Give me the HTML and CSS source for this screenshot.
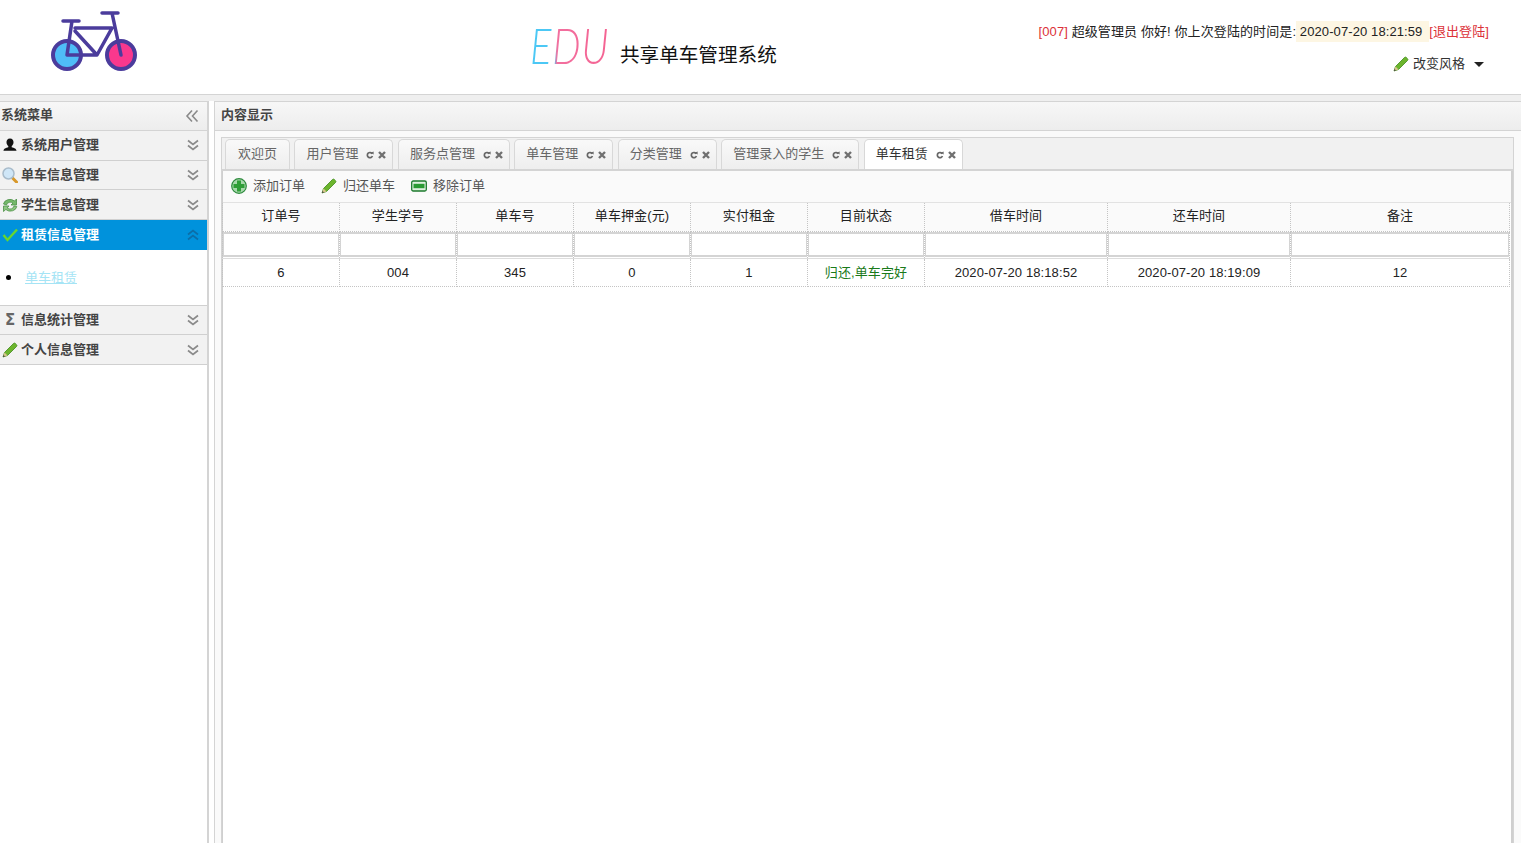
FILE: index.html
```html
<!DOCTYPE html>
<html lang="en">
<head>
  <meta charset="UTF-8" />
  <title>共享单车管理系统</title>
  <link rel="stylesheet" href="styles.css">
</head>
<body>

  <svg class="defs" width="0" height="0">
    <symbol id="i-pencil" viewBox="0 0 16 16">
      <path d="M1 15l1.500-4.500L11.500 1.500a1.300 1.300 0 0 1 1.800 0l1.200 1.200a1.300 1.300 0 0 1 0 1.800L5.500 13.500z" fill="#6cb52d" stroke="#3f8a1c" stroke-width=".8"/>
      <path d="M1 15l1.500-4.500 3 3z" fill="#d9c48f"/>
      <path d="M1 15l.6-1.900 1.300 1.300z" fill="#333"/>
    </symbol>
    <symbol id="i-down" viewBox="0 0 14 12">
      <path d="M2 1.500l5 4 5-4M2 6.500l5 4 5-4" fill="none" stroke="#8a8a8a" stroke-width="1.700"/>
    </symbol>
    <symbol id="i-up" viewBox="0 0 14 12">
      <path d="M2 5.500l5-4 5 4M2 10.500l5-4 5 4" fill="none" stroke="#0b6ea8" stroke-width="1.700"/>
    </symbol>
    <symbol id="i-refresh" viewBox="0 0 8 8">
      <path d="M6.200 2.800A2.600 2.600 0 1 0 6.400 5" fill="none" stroke="#666" stroke-width="1.700"/>
      <path d="M4.800 1.800L7.600.600v2.800z" fill="#666"/>
    </symbol>
    <symbol id="i-close" viewBox="0 0 8 8">
      <path d="M1 1l6 6M7 1L1 7" stroke="#707070" stroke-width="2.400"/>
    </symbol>
  </svg>

  <header class="top">
    <div class="logo">
      <svg width="90" height="64" viewBox="49 9 90 64">
        <circle cx="67" cy="55" r="14" fill="#4fbdf7" stroke="#4b3c9c" stroke-width="4"/>
        <circle cx="121" cy="55" r="14" fill="#f9388d" stroke="#4b3c9c" stroke-width="4"/>
        <path d="M63 21h16M102 13h16M72 21l-5 34h30l15-27H75M112 13l9 42M75 31l22 24" fill="none" stroke="#4b3c9c" stroke-width="3.500" stroke-linecap="round" stroke-linejoin="round"/>
      </svg>
    </div>
    <div class="brand">
      <span class="brand-edu">EDU</span>
      <span class="brand-name">共享单车管理系统</span>
    </div>
    <div class="user">
      <p class="user-line"><span class="red">[007]</span> 超级管理员 你好! 你上次登陆的时间是:<span class="login-time"> 2020-07-20 18:21:59 </span><a class="red" href="#">[退出登陆]</a></p>
      <p class="style-line">
        <svg class="ico16" width="16" height="16"><use href="#i-pencil"/></svg>
        <span>改变风格</span>
        <i class="caret"></i>
      </p>
    </div>
  </header>

  <div class="layout">
    <aside class="side">
      <div class="panel-title">系统菜单
        <svg class="collapse" width="14" height="14" viewBox="0 0 14 14"><path d="M7 1.500L2 7l5 5.500M12.500 1.500L7.500 7l5 5.500" fill="none" stroke="#8a8a8a" stroke-width="1.600"/></svg>
      </div>

      <div class="menu-row">
        <svg class="ico" viewBox="0 0 16 16"><path d="M8 1.500c2.400 0 3.700 1.800 3.500 4-.1 1.600-.9 2.900-1.800 3.500v1.200c2.100.6 4.800 1.300 4.800 3.600H1.500c0-2.300 2.700-3 4.800-3.600V9C5.400 8.400 4.600 7.100 4.500 5.500 4.300 3.300 5.600 1.500 8 1.500z" fill="#111"/></svg>
        <span>系统用户管理</span>
        <svg class="chev" width="14" height="12"><use href="#i-down"/></svg>
      </div>
      <div class="menu-row">
        <svg class="ico" viewBox="0 0 16 16"><path d="M9.500 10l5 5" stroke="#d8982a" stroke-width="3" stroke-linecap="round"/><circle cx="6.500" cy="6.500" r="5.500" fill="#cfe6f7" stroke="#a9bccb" stroke-width="1.500"/></svg>
        <span>单车信息管理</span>
        <svg class="chev" width="14" height="12"><use href="#i-down"/></svg>
      </div>
      <div class="menu-row">
        <svg class="ico" viewBox="0 0 16 16"><path d="M1.500 7a6.500 5.500 0 0 1 11-3L14.500 2v6H9l2-2A4 3.600 0 0 0 4.500 8z" fill="#74b96a" stroke="#4b8f46" stroke-width=".8"/><path d="M14.800 9.500a6.500 5.500 0 0 1-11 3L1.500 14.500V9h5.500l-1.800 2A4 3.600 0 0 0 12 9z" fill="#8ec882" stroke="#4b8f46" stroke-width=".8"/></svg>
        <span>学生信息管理</span>
        <svg class="chev" width="14" height="12"><use href="#i-down"/></svg>
      </div>
      <div class="menu-row active">
        <svg class="ico" viewBox="0 0 16 16"><path d="M1.500 8l4 5L15 2.500" fill="none" stroke="#67d62f" stroke-width="2.400"/></svg>
        <span>租赁信息管理</span>
        <svg class="chev" width="14" height="12"><use href="#i-up"/></svg>
      </div>
      <ul class="submenu">
        <li><a href="#">单车租赁</a></li>
      </ul>
      <div class="menu-row">
        <span class="ico sigma">Σ</span>
        <span>信息统计管理</span>
        <svg class="chev" width="14" height="12"><use href="#i-down"/></svg>
      </div>
      <div class="menu-row">
        <svg class="ico"><use href="#i-pencil"/></svg>
        <span>个人信息管理</span>
        <svg class="chev" width="14" height="12"><use href="#i-down"/></svg>
      </div>
    </aside>

    <main class="content">
      <div class="panel-title">内容显示</div>
      <div class="content-body">
        <div class="tabs-box">
          <div class="tabs">
            <div class="tab">欢迎页</div>
            <div class="tab closable">用户管理<svg width="8" height="8"><use href="#i-refresh"/></svg><svg width="8" height="8"><use href="#i-close"/></svg></div>
            <div class="tab closable">服务点管理<svg width="8" height="8"><use href="#i-refresh"/></svg><svg width="8" height="8"><use href="#i-close"/></svg></div>
            <div class="tab closable">单车管理<svg width="8" height="8"><use href="#i-refresh"/></svg><svg width="8" height="8"><use href="#i-close"/></svg></div>
            <div class="tab closable">分类管理<svg width="8" height="8"><use href="#i-refresh"/></svg><svg width="8" height="8"><use href="#i-close"/></svg></div>
            <div class="tab closable">管理录入的学生<svg width="8" height="8"><use href="#i-refresh"/></svg><svg width="8" height="8"><use href="#i-close"/></svg></div>
            <div class="tab closable selected">单车租赁<svg width="8" height="8"><use href="#i-refresh"/></svg><svg width="8" height="8"><use href="#i-close"/></svg></div>
          </div>
          <div class="tab-page">
            <div class="toolbar">
              <a class="tool" href="#">
                <svg class="ico16" width="16" height="16" viewBox="0 0 16 16"><circle cx="8" cy="8" r="7.300" fill="#a8d8ac" stroke="#2c8a3c" stroke-width="1.200"/><path d="M6 2.500h4V6h3.500v4H10v3.500H6V10H2.500V6H6z" fill="#2f9e37"/></svg>
                <span>添加订单</span>
              </a>
              <a class="tool" href="#">
                <svg class="ico16" width="16" height="16"><use href="#i-pencil"/></svg>
                <span>归还单车</span>
              </a>
              <a class="tool" href="#">
                <svg class="ico16" width="16" height="16" viewBox="0 0 16 16"><rect x=".7" y="3" width="14.600" height="10" rx="1.500" fill="#dff0df" stroke="#1c7a2c" stroke-width="1.300"/><rect x="2.500" y="5.800" width="11" height="4.400" fill="#2a9a33"/></svg>
                <span>移除订单</span>
              </a>
            </div>
            <table class="grid">
              <colgroup>
                <col class="c-s"><col class="c-s"><col class="c-s"><col class="c-s"><col class="c-s"><col class="c-s">
                <col class="c-t"><col class="c-t"><col class="c-n">
              </colgroup>
              <thead>
                <tr>
                  <th>订单号</th><th>学生学号</th><th>单车号</th><th>单车押金(元)</th><th>实付租金</th><th>目前状态</th><th>借车时间</th><th>还车时间</th><th>备注</th>
                </tr>
                <tr class="filter">
                  <td><input></td><td><input></td><td><input></td><td><input></td><td><input></td><td><input></td><td><input></td><td><input></td><td><input></td>
                </tr>
              </thead>
              <tbody>
                <tr>
                  <td>6</td><td>004</td><td>345</td><td>0</td><td>1</td><td class="ok">归还,单车完好</td><td>2020-07-20 18:18:52</td><td>2020-07-20 18:19:09</td><td>12</td>
                </tr>
              </tbody>
            </table>
          </div>
        </div>
      </div>
    </main>
  </div>

</body>
</html>
```

FILE: styles.css
```css
* {
  margin: 0;
  padding: 0;
  box-sizing: border-box;
}

html, body {
  height: 100%;
  overflow: hidden;
}

body {
  display: flex;
  flex-direction: column;
  background: #fff;
  color: #333;
  font-family: "Liberation Sans", "Noto Sans CJK SC", sans-serif;
  font-size: 13px;
}

a {
  text-decoration: none;
  color: inherit;
}

.defs {
  position: absolute;
}

/* header */
.top {
  flex: none;
  height: 95px;
  display: grid;
  grid-template-columns: 530px 1fr auto;
  border-bottom: 1px solid #d4d4d4;
}

.logo {
  padding: 9px 0 0 49px;
}

.brand {
  display: flex;
  align-items: flex-start;
  padding-top: 17px;
}

.brand-edu {
  flex: none;
  width: 112px;
  margin-right: -22px;
  font-family: Lato, sans-serif;
  font-weight: 300;
  font-style: italic;
  font-size: 50px;
  line-height: 56px;
  letter-spacing: 1px;
  transform: scaleX(.8);
  transform-origin: left;
  color: transparent;
  background: linear-gradient(to right, #4cc8f5 0, #4cc8f5 27%, #f2709f 30%, #f5608f 100%);
  -webkit-background-clip: text;
  background-clip: text;
}

.brand-name {
  margin-top: 24px;
  font-size: 19.600px;
  line-height: 28px;
  color: #111;
}

.user {
  padding: 24px 32px 0 0;
  text-align: right;
}

.user-line {
  line-height: 16px;
  color: #222;
  letter-spacing: .1px;
}

.red {
  color: #dc3138;
}

.login-time {
  background: #fdf6e3;
  padding: 3px 3px 3px 0;
}

.style-line {
  display: flex;
  justify-content: flex-end;
  align-items: center;
  gap: 4px;
  margin-top: 16px;
  padding-right: 5px;
  line-height: 16px;
}

.caret {
  width: 0;
  height: 0;
  margin-left: 5px;
  border: 5px solid transparent;
  border-top-color: #222;
  border-bottom: 0;
}

/* layout */
.layout {
  flex: 1;
  min-height: 0;
  display: flex;
  padding-top: 6px;
  background: linear-gradient(to bottom, #efefef 0, #efefef 6px, #fff 6px);
}

.panel-title {
  flex: none;
  height: 30px;
  padding-left: 1px;
  line-height: 26px;
  font-weight: bold;
  color: #444;
  background: linear-gradient(to bottom, #f7f7f7, #ededed);
  border-top: 1px solid #d4d4d4;
  border-bottom: 1px solid #d4d4d4;
  position: relative;
}

.collapse {
  position: absolute;
  right: 8px;
  top: 7px;
}

.side {
  width: 209px;
  border-right: 2px solid #d4d4d4;
}

.menu-row {
  height: 29.700px;
  display: flex;
  align-items: center;
  padding-left: 2px;
  font-weight: bold;
  color: #444;
  background: #f2f2f2;
  border-bottom: 1px solid #d0d0d0;
}

.menu-row > span:nth-child(2) {
  flex: 1;
  margin-left: 3px;
  padding-bottom: 3px;
}

.menu-row.active {
  background: #0092dc;
  color: #fff;
  border-bottom: 0;
}

.ico {
  width: 16px;
  height: 16px;
  flex: none;
}

.ico16 {
  flex: none;
}

.sigma {
  font-family: "DejaVu Sans", sans-serif;
  font-weight: bold;
  font-size: 15px;
  line-height: 16px;
  text-align: center;
  color: #666;
}

.chev {
  margin-right: 7px;
}

.submenu {
  height: 56px;
  padding: 19px 0 0 6px;
  list-style: none;
  background: #fff;
  border-bottom: 1px solid #d0d0d0;
  line-height: 18px;
}

.submenu li {
  display: flex;
  align-items: center;
  gap: 14px;
}

.submenu li::before {
  content: "";
  width: 5px;
  height: 5px;
  border-radius: 50%;
  background: #000;
}

.submenu a {
  color: #a5e4f5;
  text-decoration: underline;
}

/* content */
.content {
  flex: 1;
  display: flex;
  flex-direction: column;
  margin-left: 5px;
  border-left: 1px solid #d4d4d4;
  min-width: 0;
}

.content .panel-title {
  padding-left: 6px;
}

.content-body {
  flex: 1;
  min-height: 0;
  display: flex;
  padding: 6px 7px 0 6px;
  background: #fafafa;
}

.tabs-box {
  flex: 1;
  min-width: 0;
  display: flex;
  flex-direction: column;
  border-top: 1px solid #d4d4d4;
  border-left: 1px solid #d4d4d4;
  border-right: 1px solid #d4d4d4;
}

.tabs {
  flex: none;
  height: 33px;
  display: flex;
  align-items: flex-end;
  gap: 4.450px;
  padding-left: 3px;
  background: #f1f1f1;
  border-bottom: 2px solid #d4d4d4;
}

.tab {
  height: 30px;
  display: flex;
  align-items: center;
  padding: 0 12px 4px;
  color: #666;
  background: linear-gradient(to bottom, #f9f9f9, #eeeeee);
  border: 1px solid #d8d8d8;
  border-bottom: 0;
  border-radius: 5px 5px 0 0;
}

.tab.closable {
  padding-left: 11px;
}

.tab svg {
  margin: 4px 0 0 4px;
}

.tab svg:nth-of-type(1) {
  margin-left: 8px;
}

.tab svg:last-child {
  margin-right: -6px;
}

.tab.selected {
  color: #333;
  background: #fff;
}

.tab-page {
  flex: 1;
  min-height: 0;
  border-left: 1px solid #cfcfcf;
  border-right: 2px solid #cfcfcf;
  background: #fff;
}

.toolbar {
  height: 32px;
  display: flex;
  align-items: center;
  gap: 16px;
  padding: 0 0 2px 8px;
  background: #fafafa;
  border-bottom: 1px solid #e2e2e2;
  color: #555;
}

.tool {
  display: flex;
  align-items: center;
  gap: 6px;
}

.tool span {
  padding-bottom: 2px;
}

.grid {
  width: 1287px;
  margin-left: -1px;
  table-layout: fixed;
  border-collapse: collapse;
  text-align: center;
  letter-spacing: .1px;
  color: #222;
}

.c-s { width: 117px; }
.c-t { width: 183px; }
.c-n { width: 219px; }

.grid th,
.grid td {
  height: 28px;
  border: 1px dotted #c4c4c4;
  border-top: 0;
  font-weight: normal;
}

.grid thead th {
  padding-bottom: 4px;
  background: #fafafa;
}

.grid .filter td {
  height: 27px;
  border-bottom: 1px solid #ddd;
}

.grid input {
  display: block;
  width: 100%;
  height: 25px;
  border: 1px solid #d4d4d4;
  border-width: 2px 1px;
}

.grid tbody .ok {
  padding-bottom: 2px;
  color: #1a7a1a;
}
```
